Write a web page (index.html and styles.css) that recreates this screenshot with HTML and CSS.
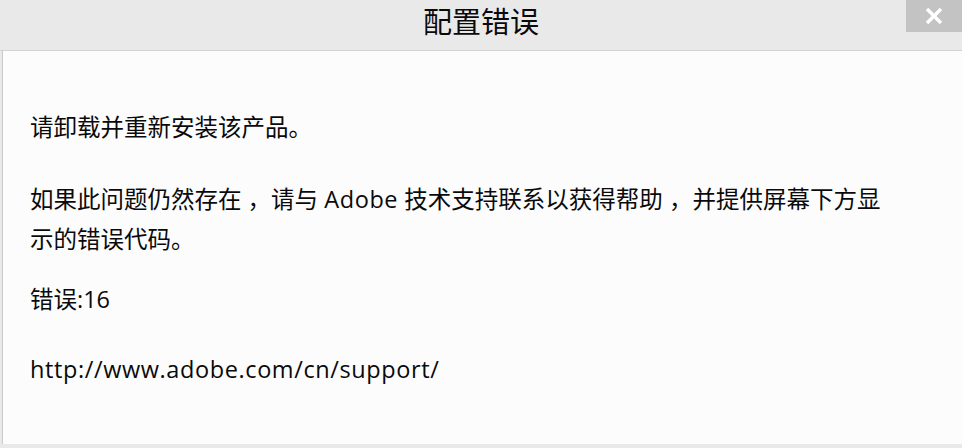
FILE: index.html
```html
<!DOCTYPE html>
<html lang="zh-CN">
<head>
<meta charset="utf-8">
<title>配置错误</title>
<link rel="stylesheet" href="styles.css">
</head>
<body>
<div class="dialog">
  <header class="titlebar">
    <h1 class="title">配置错误</h1>
    <button class="close" aria-label="关闭">
      <svg width="18" height="18" viewBox="0 0 18 18"><path d="M2 2 L16 16 M16 2 L2 16" stroke="#fff" stroke-width="3.4"/></svg>
    </button>
  </header>
  <main class="content">
    <p class="msg m1">请卸载并重新安装该产品。</p>
    <p class="msg m2">如果此问题仍然存在 ，请与 <span class="latin">Adobe</span> 技术支持联系以获得帮助 ，并提供屏幕下方显示的错误代码。</p>
    <p class="msg m3">错误:16</p>
    <p class="msg m4 latin">http://www.adobe.com/cn/support/</p>
  </main>
</div>
</body>
</html>
```
FILE: styles.css
```css
* { box-sizing: border-box; }
html, body { margin: 0; padding: 0; }
body {
  width: 962px;
  height: 448px;
  background: #e9e9ea;
  font-family: "Open Sans", "Noto Sans CJK SC", sans-serif;
  color: #0a0a0a;
  overflow: hidden;
}
.dialog {
  display: flex;
  flex-direction: column;
  height: 448px;
}
.titlebar {
  height: 51px;
  flex: none;
  display: flex;
  justify-content: center;
  position: relative;
  background: #e9e9ea;
  border-bottom: 1px solid #d2d2d4;
}
.title {
  margin: 0;
  font-family: "Noto Sans CJK SC", sans-serif;
  font-weight: 400;
  font-size: 29px;
  line-height: 40px;
  color: #0a0a0a;
}
.close {
  position: absolute;
  top: 0;
  right: 0;
  width: 56px;
  height: 32px;
  border: 0;
  padding: 0;
  background: #c3c3c4;
  display: flex;
  align-items: center;
  justify-content: center;
}
.content {
  flex: 1;
  margin: 0 0 4px 2px;
  border-left: 1px solid #c9c9cb;
  background: #fcfcfd;
  padding: 56px 66px 0 27px;
}
.msg {
  margin: 0;
  font-size: 23.5px;
  line-height: 40px;
}
.latin { letter-spacing: 0.6px; }
.m2 { margin-top: 32px; }
.m3 { margin-top: 20px; }
.m4 { margin-top: 30px; }
```
